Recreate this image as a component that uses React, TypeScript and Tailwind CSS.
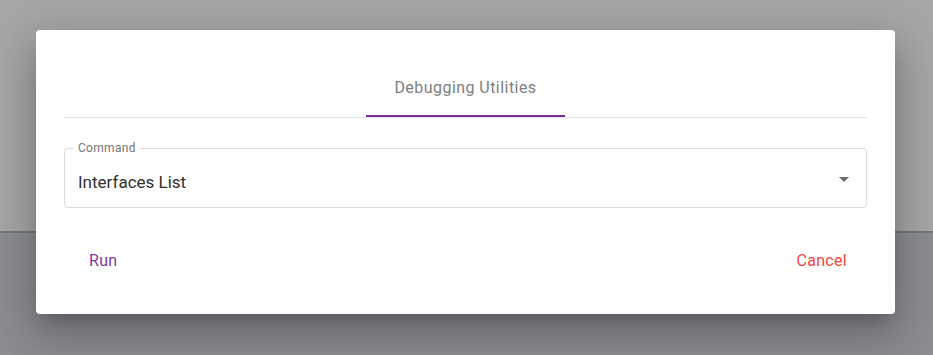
import React from 'react';

const App: React.FC = () => {
  return (
    <div
      className="relative w-[933px] h-[355px] overflow-hidden flex flex-col"
      style={{ fontFamily: 'Roboto, "Liberation Sans", sans-serif' }}
    >
      <div className="h-[231px] bg-[#a6a6a6]" />
      <div className="h-[2px] bg-[#74777c]" />
      <div className="flex-1 bg-[#8b8d91]" />

      <div className="absolute left-[36px] top-[30px] w-[859px] h-[284px] bg-white rounded-[4px] shadow-[0_11px_15px_-7px_rgba(0,0,0,0.2),0_24px_38px_3px_rgba(0,0,0,0.14),0_9px_46px_8px_rgba(0,0,0,0.12)] px-[28px] pt-[32px]">
        <div className="border-b border-[#e0e0e0]">
          <div className="flex justify-center">
            <div className="w-[199px] h-[55px] flex flex-col">
              <div className="flex-1 flex items-center justify-center pb-[1px] text-[16px] tracking-[0.45px] text-[#808080]">
                Debugging Utilities
              </div>
              <div className="h-[2px] bg-[#7b2e96]" />
            </div>
          </div>
        </div>

        <div className="relative mt-[30px] h-[60px] border border-[#dcdcdc] rounded-[4px] flex items-center pl-[13px] pr-[16px] pt-[10px]">
          <span className="absolute left-[9px] -top-[8px] bg-white px-[4px] text-[12px] tracking-[0.3px] leading-[14px] text-[#757575]">
            Command
          </span>
          <span className="flex-1 text-[17px] text-[#303030]">Interfaces List</span>
          <svg width="10" height="5" viewBox="0 0 10 5" className="mb-[8px] mr-[1px]">
            <path d="M0 0 L10 0 L5 5 Z" fill="#6b6b6b" />
          </svg>
        </div>

        <div className="flex justify-between items-center mt-[41px] px-[25px] text-[16px] tracking-[0.3px]">
          <span className="text-[#7a3a9c]">Run</span>
          <span className="text-[#f4433a] mr-[-5px]">Cancel</span>
        </div>
      </div>
    </div>
  );
};

export default App;
